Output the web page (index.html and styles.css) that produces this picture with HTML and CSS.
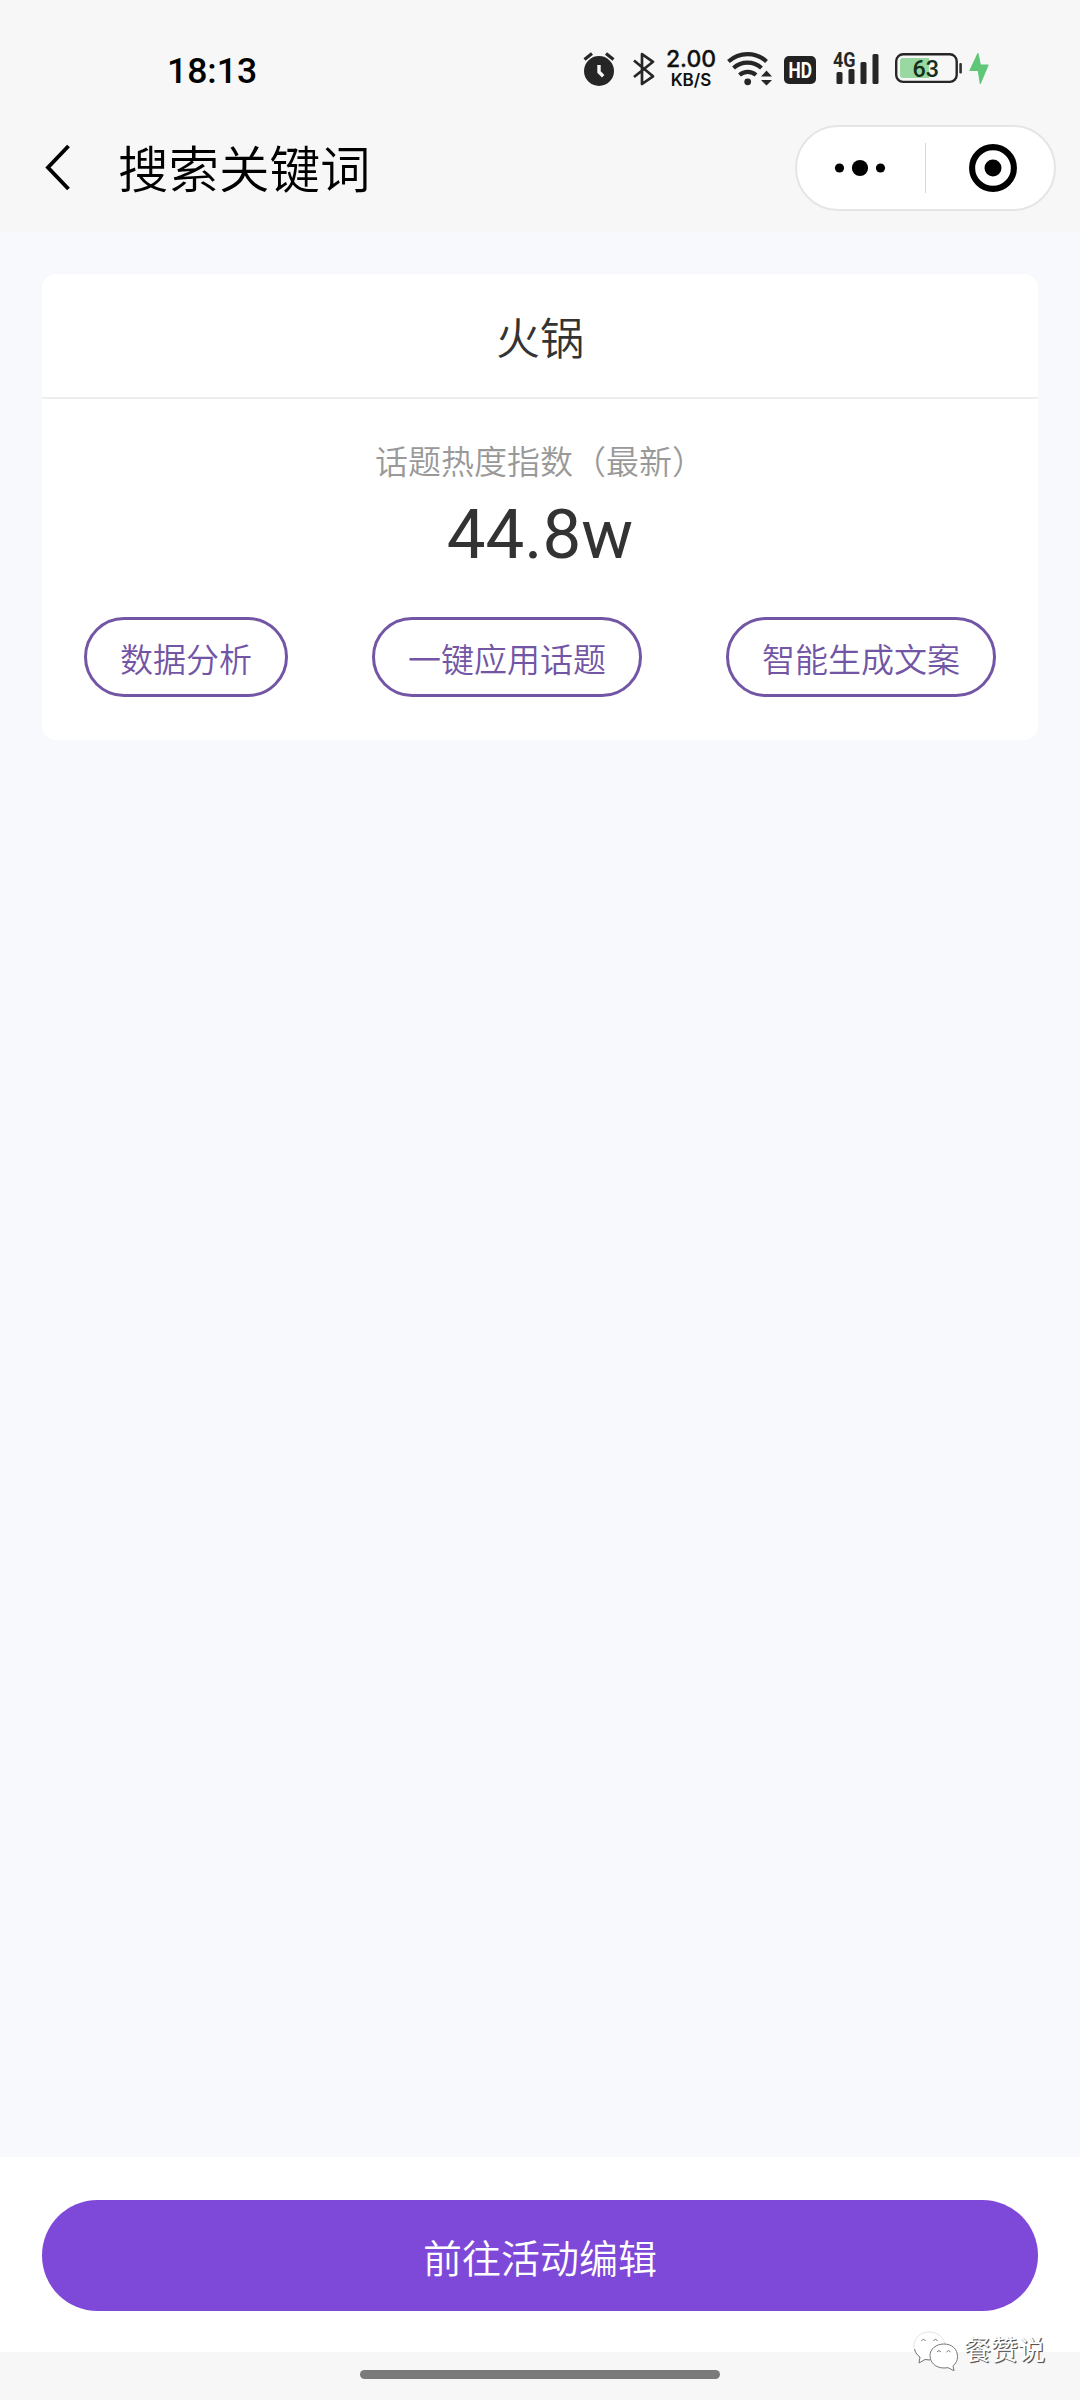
FILE: index.html
```html
<!DOCTYPE html>
<html lang="zh-CN">
<head>
<meta charset="utf-8">
<title>搜索关键词</title>
<link rel="stylesheet" href="styles.css">
</head>
<body>
<div class="screen">
  <header class="header">
    <div class="status">
      <span class="time">18:13</span>
      <div class="status-icons">
        <svg width="44" height="48" viewBox="580 45 44 48">
          <circle cx="599" cy="71" r="15" fill="#262626"/>
          <path d="M584.5 59.5l7.500-6M606 53.500l7.500 6" stroke="#262626" stroke-width="3.200" fill="none"/>
          <path d="M599 65v7l4.200 4.200" stroke="#f7f7f7" stroke-width="3.400" fill="none"/>
        </svg>
        <svg width="38" height="48" viewBox="624 45 38 48">
          <path d="M634 60.500l19 15.800-11 7.700V54.200l11 7.600-19 15.200" stroke="#262626" stroke-width="2.700" fill="none" stroke-linejoin="round"/>
        </svg>
        <div class="speed"><span class="speed-value">2.00</span><span class="speed-unit">KB/S</span></div>
        <svg width="58" height="48" viewBox="722 45 58 48">
          <g fill="none" stroke="#262626" stroke-width="4.200">
            <path d="M728.500 61.500a28 28 0 0 1 38 0"/>
            <path d="M733.500 68a21 21 0 0 1 28 0"/>
            <path d="M739.500 75a12.500 12.500 0 0 1 16.500 0"/>
          </g>
          <circle cx="747.700" cy="81.800" r="3.400" fill="#262626"/>
          <path d="M761 76.500h11l-5.500-6zM761 80h11l-5.500 5.500z" fill="#262626"/>
        </svg>
        <svg width="48" height="48" viewBox="780 45 48 48">
          <rect x="784" y="56" width="32" height="28" rx="5" fill="#222"/>
          <text x="788.500" y="78" class="hd" textLength="23.500" lengthAdjust="spacingAndGlyphs">HD</text>
        </svg>
        <svg width="62" height="48" viewBox="828 45 62 48">
          <g fill="#262626">
            <rect x="836.500" y="72" width="6" height="12" rx="1.500"/>
            <rect x="848.500" y="69" width="6" height="15" rx="1.500"/>
            <rect x="860.500" y="62" width="6" height="22" rx="1.500"/>
            <rect x="872.500" y="54" width="6" height="30" rx="1.500"/>
          </g>
          <text x="833" y="67" class="net" textLength="22.500" lengthAdjust="spacingAndGlyphs">4G</text>
        </svg>
        <svg width="76" height="48" viewBox="890 45 76 48">
          <rect x="896.200" y="54.200" width="60.500" height="27.700" rx="7" fill="none" stroke="#262626" stroke-width="2.400"/>
          <path d="M903 58h26v20h-26a3 3 0 0 1-3-3V61a3 3 0 0 1 3-3z" fill="#99d8a0"/>
          <rect x="959.300" y="63" width="2.600" height="10.500" rx="1" fill="#333"/>
          <text x="912.500" y="76.700" class="battery-level" textLength="26.500" lengthAdjust="spacingAndGlyphs">63</text>
        </svg>
        <svg width="26" height="48" viewBox="966 45 26 48">
          <path d="M978 53.500L970 70.500h8.300l2 13L988 65h-7.700z" fill="#5fc777" stroke="#5fc777" stroke-width="1.200" stroke-linejoin="round"/>
        </svg>
      </div>
    </div>
    <div class="nav">
      <svg class="back" width="30" height="52" viewBox="43 142 30 52"><path d="M68.500 146L48 167.500 68.500 189" fill="none" stroke="#000" stroke-width="3.900"/></svg>
      <h1 class="title">搜索关键词</h1>
      <div class="capsule">
        <svg class="more" width="54" height="20" viewBox="0 0 54 20"><circle cx="6.500" cy="10" r="4.600"/><circle cx="27" cy="10" r="8.100"/><circle cx="47.500" cy="10" r="4.600"/></svg>
        <span class="split"></span>
        <svg class="close" width="50" height="50" viewBox="0 0 50 50"><circle cx="25" cy="25" r="20.900" fill="none" stroke="#000" stroke-width="6.100"/><circle cx="25" cy="25" r="8.500"/></svg>
      </div>
    </div>
  </header>
  <main class="content">
    <section class="card">
      <h2 class="keyword">火锅</h2>
      <div class="metrics">
        <div class="label">话题热度指数（最新）</div>
        <div class="value">44.8w</div>
        <div class="actions">
          <button class="action">数据分析</button>
          <button class="action">一键应用话题</button>
          <button class="action">智能生成文案</button>
        </div>
      </div>
    </section>
  </main>
  <div class="bottom"><button class="primary">前往活动编辑</button></div>
  <footer class="gesture"><span class="home-bar"></span></footer>
  <div class="watermark">
    <svg width="48" height="44" viewBox="0 0 48 44">
      <g fill="none" stroke="#777" stroke-width="1">
        <path fill="#fff" stroke="#e4e4e4" d="M16 3C7 3 1 9.500 1 17c0 5 2.500 8.500 6 11l-1 6 6-3.500 6 .5c8 0 14-6 14-14S25 3 16 3z"/>
        <path d="M1.500 20c1 4 3 6.500 5.500 8l-1 6 6-3.500 5 .5"/>
        <path fill="#fff" stroke="#777" d="M31 15c-8 0-14 5-14 11.500S22 39 31 39l4-.3 6 3-1-5c3-2 4.500-5.500 4.500-9C44.500 20 39 15 31 15z"/>
        <path d="M8.500 12q2-3.500 4 0M20.500 12q2-3.500 4 0M24 23q2-3 4 0M33.500 23q2-3 4 0"/>
      </g>
    </svg>
    <span>餐赞说</span>
  </div>
</div>
</body>
</html>
```
FILE: styles.css
```css
* { box-sizing: border-box; }
body {
  margin: 0;
  font-family: Roboto, "Noto Sans CJK SC", sans-serif;
  color: #333;
}
.screen {
  position: relative;
  display: flex;
  flex-direction: column;
  width: 1080px;
  height: 2400px;
  background: #f7f9fd;
}
.header { height: 232px; background: #f7f7f7; }
.status {
  display: flex;
  justify-content: space-between;
  height: 104px;
  padding: 45px 88px 0 167px;
}
.time { font-size: 35.500px; font-weight: 500; line-height: 52px; color: #000; }
.status-icons { display: flex; height: 48px; }
.speed {
  display: flex;
  flex-direction: column;
  align-items: center;
  width: 60px;
  padding: 4px 2px 0 0;
  font-family: Inter, sans-serif;
  font-weight: 600;
  color: #111;
}
.speed-value { font-size: 23px; line-height: 21px; font-weight: 500; -webkit-text-stroke: .3px #111; }
.speed-unit { font-size: 17px; line-height: 20px; }
.hd { font: 700 22px Roboto, sans-serif; fill: #fff; }
.net { font: 700 20px Roboto, sans-serif; fill: #262626; }
.battery-level { font: 500 23.500px Roboto, sans-serif; fill: #12301a; }
.nav {
  display: flex;
  align-items: center;
  height: 128px;
  padding: 0 24px 0 43px;
}
.back { flex: none; }
.title {
  flex: 1;
  margin: 0 0 0 45px;
  padding-bottom: 4px;
  font-family: "Noto Sans CJK SC", sans-serif;
  font-size: 50.5px;
  font-weight: 350;
  line-height: 72px;
  color: #000;
}
.capsule {
  display: flex;
  align-items: center;
  width: 261px;
  height: 86px;
  padding: 0 36px;
  border: 2px solid #e5e5e5;
  border-radius: 43px;
  background: #fff;
}
.split { width: 1px; height: 50px; margin-left: 38px; background: #d8d8d8; }
.close { margin-left: 42px; flex: none; }
.content { flex: 1; padding: 42px; }
.card { height: 466px; border-radius: 14px; background: #fff; }
.keyword {
  height: 125px;
  margin: 0;
  border-bottom: 2px solid #ededed;
  font-family: "Noto Sans CJK SC", sans-serif;
  font-size: 44px;
  font-weight: 350;
  line-height: 124px;
  text-align: center;
}
.metrics { padding: 36px 42px 0; text-align: center; }
.label { margin-bottom: 2px; font: 350 33px/50px "Noto Sans CJK SC", sans-serif; color: #999; }
.value { height: 97px; font-size: 69px; line-height: 95px; }
.actions { display: flex; justify-content: space-between; margin-top: 33px; }
.action {
  height: 80px;
  padding: 2px 33px 0;
  border: 3px solid #7355a5;
  border-radius: 40px;
  background: #fff;
  font: 350 33px/71px "Noto Sans CJK SC", sans-serif;
  color: #7355a5;
}
.bottom { height: 195px; padding: 43px 42px 0; background: #fff; }
.primary {
  display: block;
  width: 100%;
  height: 111px;
  padding: 2px 0 0;
  border: 0;
  border-radius: 56px;
  background: #7e49d8;
  font: 350 39px/105px "Noto Sans CJK SC", sans-serif;
  color: #fff;
}
.gesture {
  display: flex;
  justify-content: center;
  height: 48px;
  padding-top: 18px;
  background: #f7f7f7;
}
.home-bar { width: 360px; height: 9px; border-radius: 5px; background: #7a7a7a; }
.watermark {
  position: absolute;
  left: 913px;
  top: 2328px;
  display: flex;
  align-items: center;
  gap: 3px;
  font-size: 27px;
  line-height: 46px;
  color: #fff;
  text-shadow: 1px 1px 0 #555, 1px 1px 1px #777;
}
```
